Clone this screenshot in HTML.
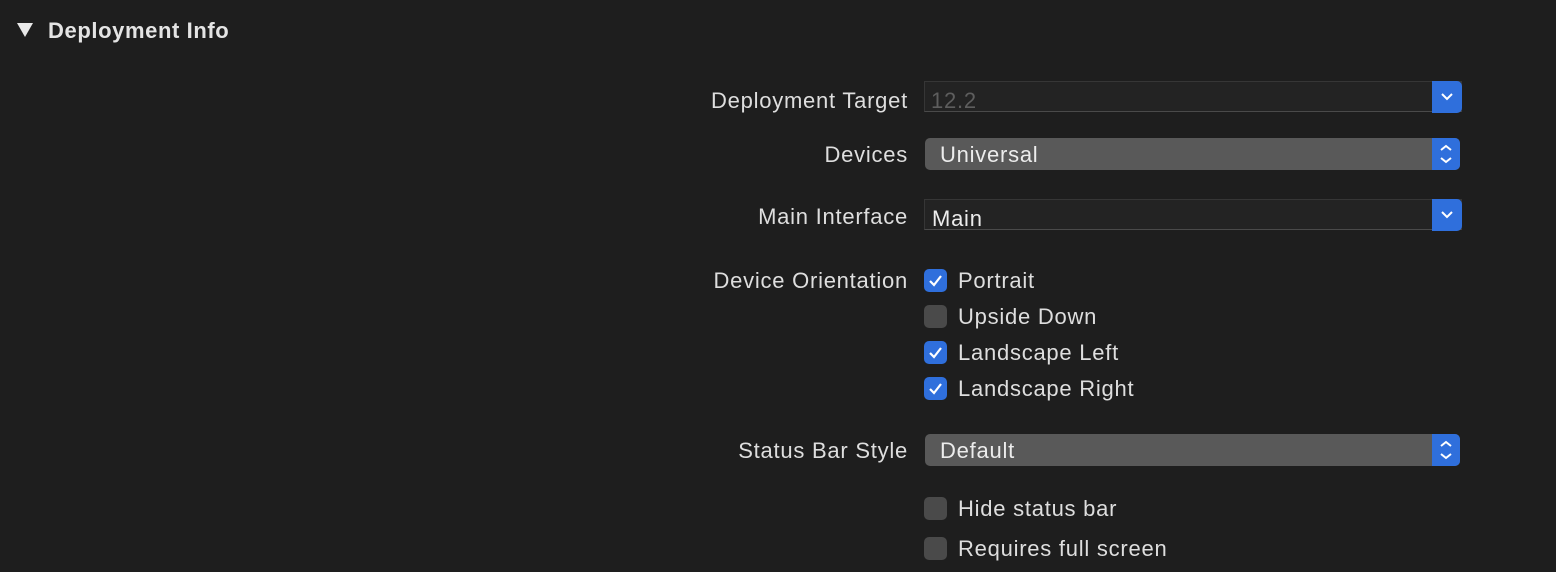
<!DOCTYPE html>
<html><head><style>
body{margin:0;width:1556px;height:572px;background:#1e1e1e;font-family:"Liberation Sans",sans-serif;color:#dcdcdc;position:relative;overflow:hidden}
.a{position:absolute}
.lbl,.txt,.ct{font-size:22px;letter-spacing:0.75px}
.lbl{position:absolute;right:648px;color:#dedede;line-height:24px;white-space:nowrap}
.fld{position:absolute;left:924px;width:538px;height:31px;background:#232323;border:1px solid #363636;border-bottom-color:#4a4a4a;box-sizing:border-box}
.pop{position:absolute;left:925px;width:535px;height:32px;background:#595959;border-radius:5px;box-sizing:border-box}
.btn{position:absolute;right:-1px;top:-1px;width:30px;height:32px;background:#2f6fdc;border-radius:0 5px 5px 0}
.pop .btn{right:0;top:0;width:28px}
.txt{position:absolute;line-height:24px;white-space:nowrap}
.cb{position:absolute;left:924px;width:23px;height:23px;border-radius:5px;background:#2f6fdc}
.cb.off{background:#4a4a4a}
.ct{position:absolute;left:958px;line-height:24px;color:#dedede;white-space:nowrap}
</style></head><body>
<svg class="a" style="left:16px;top:22px" width="18" height="16"><polygon points="1,1 17,1 9,15" fill="#e8e8e8"/></svg>
<div class="a" style="left:48px;top:19px;font-size:22px;letter-spacing:0.6px;font-weight:bold;color:#e4e4e4;line-height:24px">Deployment Info</div>

<div class="lbl" style="top:89px">Deployment Target</div>
<div class="fld" style="top:81px"><div class="txt" style="left:6px;top:7px;color:#5e5e5e">12.2</div>
<div class="btn"><svg width="30" height="32"><polyline points="10,13 15,18 20,13" fill="none" stroke="#fff" stroke-width="2"/></svg></div></div>

<div class="lbl" style="top:143px">Devices</div>
<div class="pop" style="top:138px"><div class="txt" style="left:15px;top:5px;color:#ececec">Universal</div>
<div class="btn"><svg width="28" height="32"><polyline points="9,12 14,8 19,12" fill="none" stroke="#fff" stroke-width="2"/><polyline points="9,20 14,24 19,20" fill="none" stroke="#fff" stroke-width="2"/></svg></div></div>

<div class="lbl" style="top:205px">Main Interface</div>
<div class="fld" style="top:199px"><div class="txt" style="left:7px;top:7px;color:#ececec">Main</div>
<div class="btn"><svg width="30" height="32"><polyline points="10,13 15,18 20,13" fill="none" stroke="#fff" stroke-width="2"/></svg></div></div>

<div class="lbl" style="top:269px">Device Orientation</div>
<div class="cb" style="top:269px"><svg width="23" height="23"><polyline points="6,12 10,16 17,7" fill="none" stroke="#fff" stroke-width="2.2"/></svg></div>
<div class="ct" style="top:269px">Portrait</div>
<div class="cb off" style="top:305px"></div>
<div class="ct" style="top:305px">Upside Down</div>
<div class="cb" style="top:341px"><svg width="23" height="23"><polyline points="6,12 10,16 17,7" fill="none" stroke="#fff" stroke-width="2.2"/></svg></div>
<div class="ct" style="top:341px">Landscape Left</div>
<div class="cb" style="top:377px"><svg width="23" height="23"><polyline points="6,12 10,16 17,7" fill="none" stroke="#fff" stroke-width="2.2"/></svg></div>
<div class="ct" style="top:377px">Landscape Right</div>

<div class="lbl" style="top:439px">Status Bar Style</div>
<div class="pop" style="top:434px"><div class="txt" style="left:15px;top:5px;color:#ececec">Default</div>
<div class="btn"><svg width="28" height="32"><polyline points="9,12 14,8 19,12" fill="none" stroke="#fff" stroke-width="2"/><polyline points="9,20 14,24 19,20" fill="none" stroke="#fff" stroke-width="2"/></svg></div></div>

<div class="cb off" style="top:497px"></div>
<div class="ct" style="top:497px">Hide status bar</div>
<div class="cb off" style="top:537px"></div>
<div class="ct" style="top:537px">Requires full screen</div>
</body></html>
